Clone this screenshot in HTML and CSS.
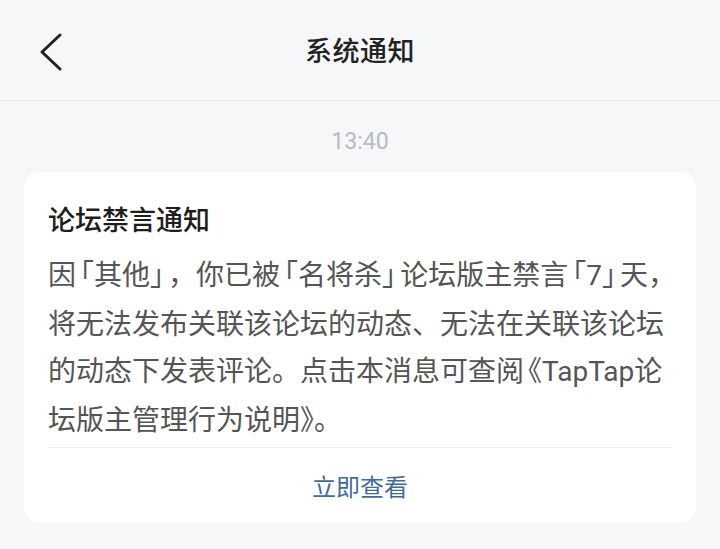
FILE: index.html
```html
<!DOCTYPE html>
<html lang="zh-CN">
<head>
<meta charset="utf-8">
<title>系统通知</title>
<link rel="stylesheet" href="styles.css">
</head>
<body>
<div class="page">
  <header class="topbar">
    <button class="back" aria-label="返回">
      <svg width="24" height="40" viewBox="0 0 24 40"><path d="M20 3 L2 20 L20 37" fill="none" stroke="#222" stroke-width="3" stroke-linecap="round" stroke-linejoin="round"/></svg>
    </button>
    <h1 class="title">系统通知</h1>
  </header>
  <main class="feed">
    <div class="time">13:40</div>
    <section class="card">
      <h2 class="card-title">论坛禁言通知</h2>
      <p class="card-body">因<span class="ql">「</span>其他<span class="qr">」</span>，你已被<span class="ql">「</span>名将杀<span class="qr">」</span>论坛版主禁言<span class="ql">「</span><span class="lat">7</span><span class="qr">」</span>天，<br>将无法发布关联该论坛的动态、无法在关联该论坛<br>的动态下发表评论。点击本消息可查阅<span class="ql">《</span><span class="lat">TapTap</span>论<br>坛版主管理行为说明》。</p>
      <div class="card-action">立即查看</div>
    </section>
  </main>
</div>
</body>
</html>
```

FILE: styles.css
```css
* { box-sizing: border-box; }
html, body {
  margin: 0;
  padding: 0;
}
body {
  width: 720px;
  height: 549px;
  overflow: hidden;
  background: #f6f7f9;
  font-family: "Noto Sans CJK SC", "Noto Sans", sans-serif;
  color: #222;
}
.page {
  display: flex;
  flex-direction: column;
}
.topbar {
  height: 101px;
  border-bottom: 1px solid #e9eaec;
  display: flex;
  align-items: center;
  justify-content: center;
  position: relative;
}
.back {
  position: absolute;
  left: 40px;
  top: 32px;
  width: 24px;
  height: 40px;
  padding: 0;
  border: 0;
  background: none;
  display: flex;
}
.title {
  margin: 0;
  font-size: 27px;
  font-weight: 500;
  line-height: 40px;
  color: #222;
  letter-spacing: 0.5px;
}
.feed {
  display: flex;
  flex-direction: column;
  padding: 0 24px;
}
.time {
  text-align: center;
  font-family: "Roboto", sans-serif;
  font-size: 23px;
  line-height: 36px;
  margin-top: 23px;
  color: #b6bbc2;
}
.card {
  margin-top: 12px;
  background: #fff;
  border-radius: 16px;
  padding: 28px 24px 0;
  display: flex;
  flex-direction: column;
}
.card-title {
  margin: 0;
  font-size: 27px;
  font-weight: 500;
  line-height: 38px;
  color: #1e1e1e;
}
.card-body {
  margin: 12px 0 0;
  padding-bottom: 5px;
  font-size: 28px;
  line-height: 47px;
  color: #555;
  white-space: nowrap;
  border-bottom: 1px solid #f0f0f2;
}
.lat {
  font-family: "Roboto", sans-serif;
}
.ql {
  font-feature-settings: "halt";
  margin-left: 4px;
}
.qr {
  font-feature-settings: "halt";
  margin-right: 4px;
}
.card-action {
  height: 75px;
  display: flex;
  align-items: center;
  justify-content: center;
  font-size: 24px;
  color: #3f6c99;
}
```
